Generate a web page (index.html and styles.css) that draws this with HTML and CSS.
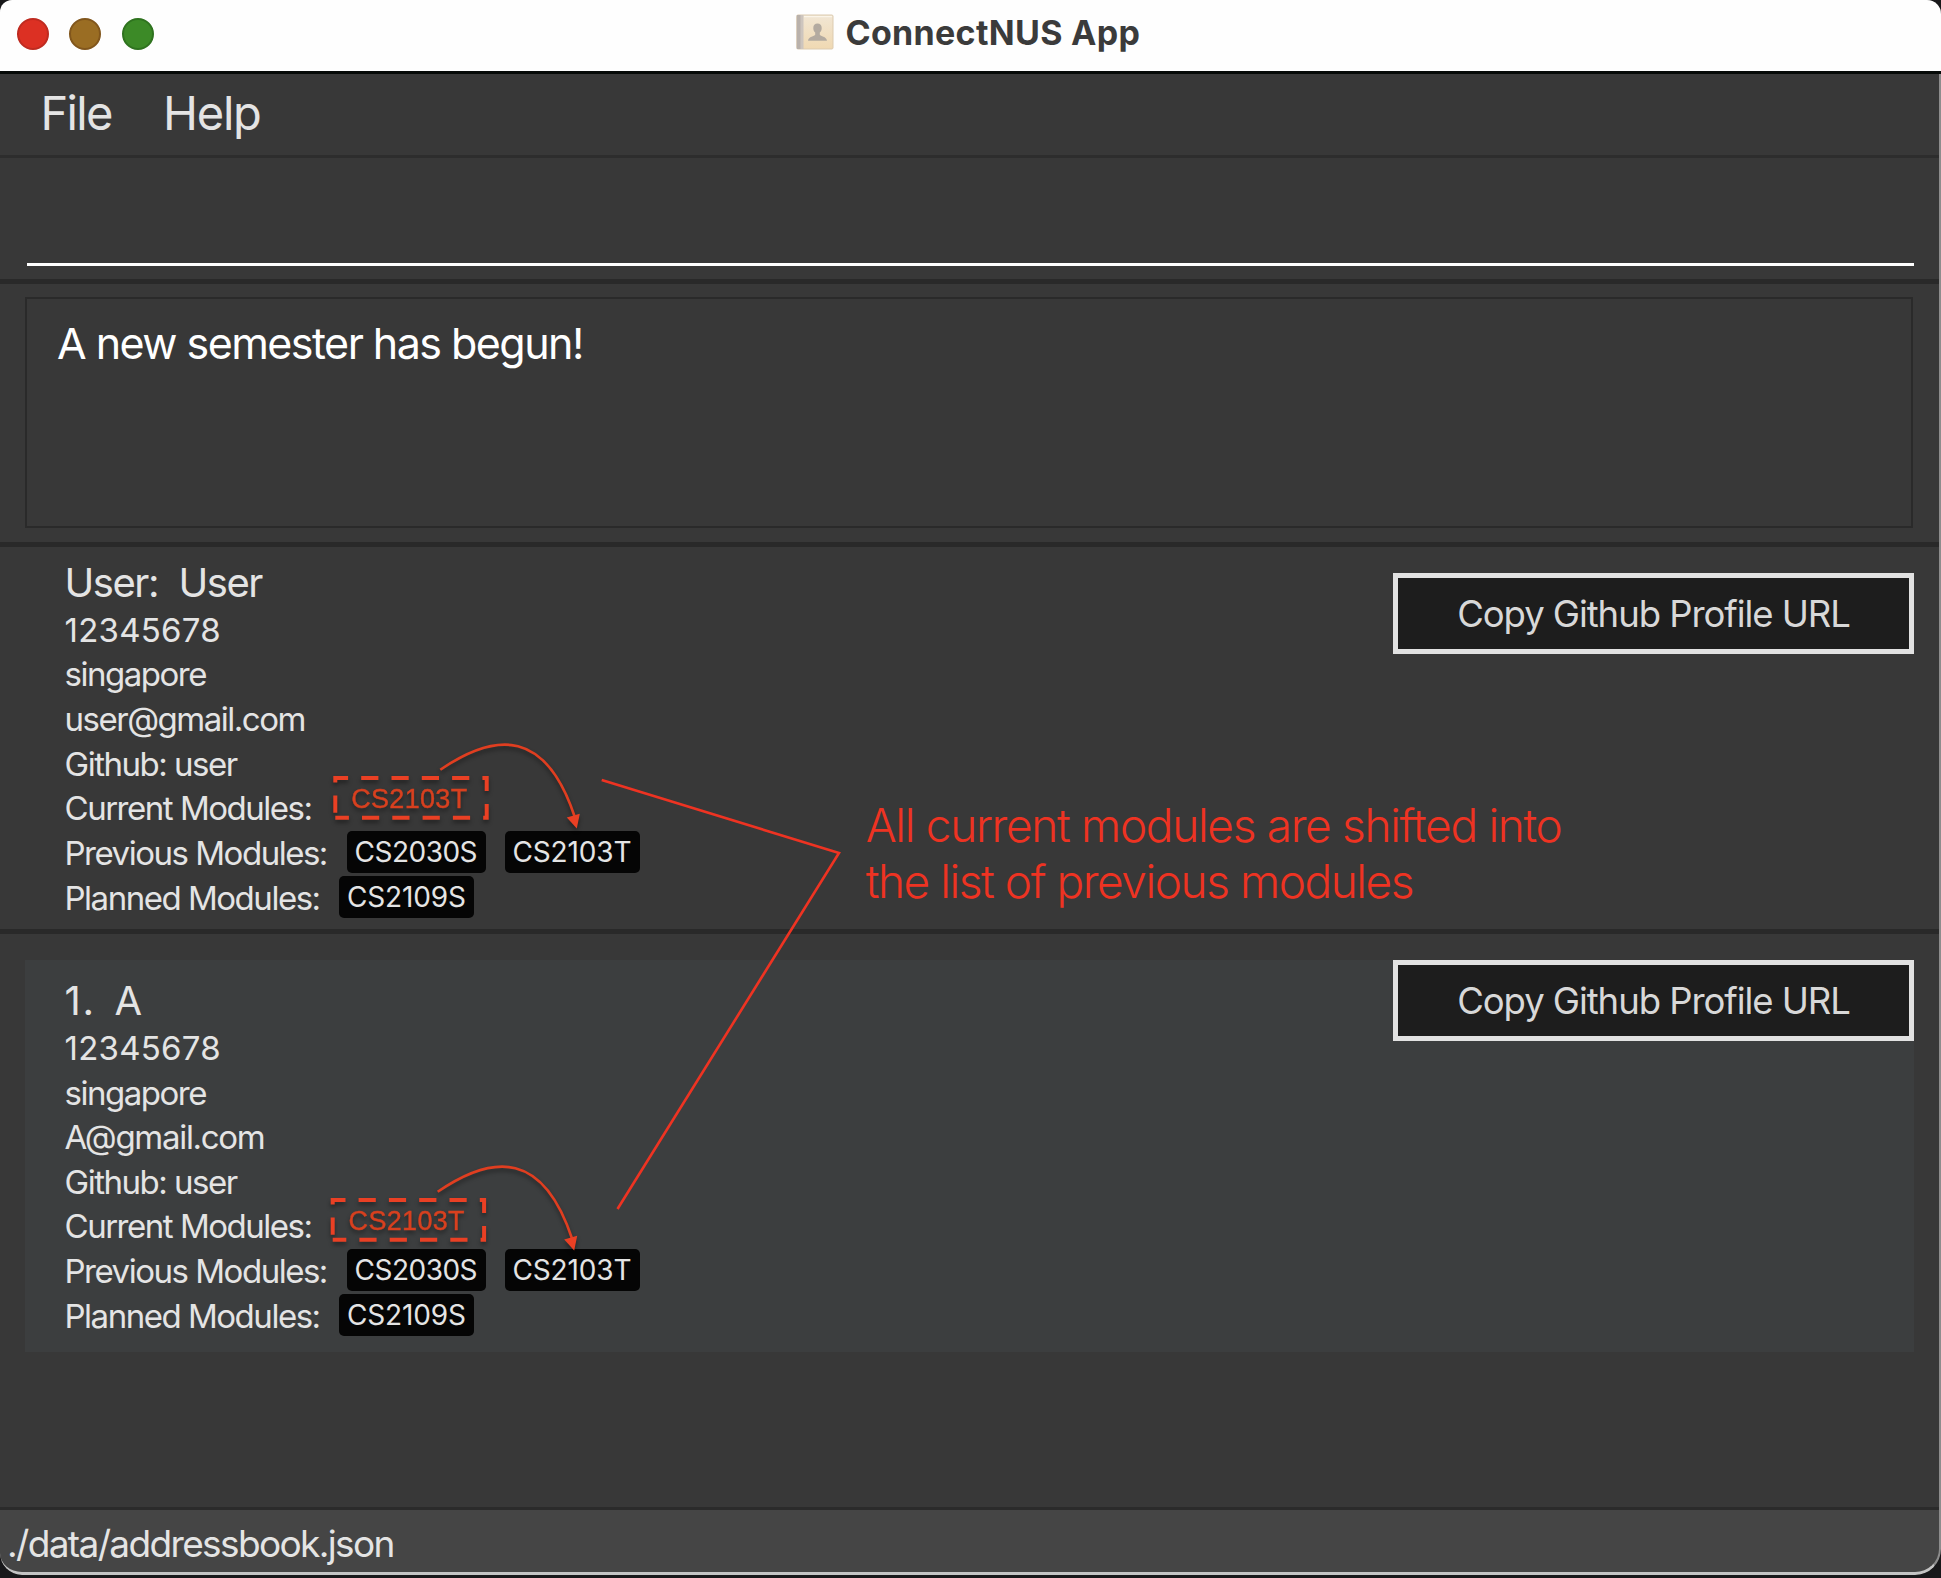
FILE: index.html
```html
<!DOCTYPE html>
<html lang="en">
<head>
<meta charset="utf-8">
<title>ConnectNUS App</title>
<link rel="stylesheet" href="styles.css">
</head>
<body>
<div class="window">
  <header class="titlebar">
    <div class="lights">
      <span class="light light-close"></span>
      <span class="light light-minimise"></span>
      <span class="light light-zoom"></span>
    </div>
    <div class="title">
      <svg class="title-icon" width="38" height="36" viewBox="0 0 38 36">
        <defs>
          <linearGradient id="cover" x1="0" y1="0" x2="0" y2="1">
            <stop offset="0" stop-color="#f1e6d4"/>
            <stop offset="1" stop-color="#f0d9b2"/>
          </linearGradient>
        </defs>
        <rect x="0.8" y="1" width="36.2" height="34" rx="1.2" fill="url(#cover)" stroke="#dccbb0" stroke-width="1"/>
        <path d="M.8 1H7v34H.8z" fill="#b9b1ab"/>
        <path d="M4.5 1H7.500v34H4.500z" fill="#cdc5be"/>
        <path d="M8 2.600H36" stroke="#fbf4e8" stroke-width="1.200"/>
        <path d="M21.500 9.500c-2.700 0-4.200 1.800-4.200 4.400 0 2 .7 3.600 1.900 4.700v2.200c-.6 1.500-6.700 1.600-7.200 6h19c-.5-4.400-6.600-4.500-7.200-6v-2.200c1.200-1.100 1.900-2.700 1.900-4.700 0-2.600-1.500-4.400-4.200-4.400z" fill="#b3aaa0"/>
      </svg>
      <span class="title-text">ConnectNUS App</span>
    </div>
  </header>

  <nav class="menubar">
    <span class="menu menu-file">File</span>
    <span class="menu menu-help">Help</span>
  </nav>

  <section class="command"><div class="command-input"></div></section>

  <section class="result"><div class="result-box">A new semester has begun!</div></section>

  <section class="profile">
    <div class="details">
      <div class="name"><span class="name-prefix">User:</span><span>User</span></div>
      <div class="row digits">12345678</div>
      <div class="row">singapore</div>
      <div class="row">user@gmail.com</div>
      <div class="row">Github: user</div>
      <div class="row">Current Modules:</div>
      <div class="row"><span class="label-previous">Previous Modules:</span><span class="chip chip-wide">CS2030S</span><span class="chip">CS2103T</span></div>
      <div class="row"><span class="label-planned">Planned Modules:</span><span class="chip">CS2109S</span></div>
    </div>
    <button class="copy">Copy Github Profile URL</button>
  </section>

  <section class="list">
    <div class="card">
      <div class="details">
        <div class="name"><span class="name-index">1.</span><span>A</span></div>
        <div class="row digits">12345678</div>
        <div class="row">singapore</div>
        <div class="row email-short">A@gmail.com</div>
        <div class="row">Github: user</div>
        <div class="row">Current Modules:</div>
        <div class="row"><span class="label-previous">Previous Modules:</span><span class="chip chip-wide">CS2030S</span><span class="chip">CS2103T</span></div>
        <div class="row"><span class="label-planned">Planned Modules:</span><span class="chip">CS2109S</span></div>
      </div>
      <button class="copy">Copy Github Profile URL</button>
    </div>
  </section>

  <footer class="status">./data/addressbook.json</footer>

  <div class="frame"></div>

  <svg class="annotations" width="1941" height="1578" viewBox="0 0 1941 1578">
    <defs>
      <g id="shift">
        <path class="dashed" d="M335.300 817.700V778H486.700V817.700Z"/>
        <text class="shift-text" x="351.200" y="808">CS2103T</text>
        <path class="arc" d="M440.300 769.800C497 731 546 730 574.800 817"/>
        <path class="head" d="M566.800 817.500L579.800 813.800L576.800 828.500Z"/>
      </g>
    </defs>
    <use class="shift" href="#shift"/>
    <use class="shift" href="#shift" x="-2.600" y="422"/>
    <path class="pointer" d="M601.700 780L839 853L617.500 1209"/>
  </svg>
  <p class="note">All current modules are shifted into<br><span class="note-second">the list of previous modules</span></p>
</div>
</body>
</html>
```
FILE: styles.css
```css
* { box-sizing: border-box; }

body {
  margin: 0;
  width: 1941px;
  height: 1578px;
  overflow: hidden;
  background: #18181a;
  font-family: Inter, "Liberation Sans", sans-serif;
  color: #e4e4e4;
}

.window {
  position: relative;
  display: flex;
  flex-direction: column;
  width: 1941px;
  height: 1575px;
  overflow: hidden;
  border-radius: 12px 14px 26px 22px;
  background: #383838;
  white-space: nowrap;
}

.titlebar {
  display: flex;
  height: 74px;
  padding-left: 16.500px;
  background: #fefefe;
  border-bottom: 3px solid #060a08;
}

.lights { display: flex; gap: 20.700px; margin: 18px 641px 0 0; width: 138px; }
.light { width: 32px; height: 32px; flex: none; border-radius: 50%; border: 2px solid; }
.light-close { background: #dc3023; border-color: #bf2b20; }
.light-minimise { background: #9a6d23; border-color: #81561c; }
.light-zoom { background: #3c8a27; border-color: #2f731f; }

.title { display: flex; gap: 12px; }
.title-icon { margin-top: 14px; }
.title-text { font-size: 34px; font-weight: 700; line-height: 66px; letter-spacing: .3px; color: #3b3b3b; }

.menubar {
  display: flex;
  height: 84px;
  padding-left: 40.500px;
  border-bottom: 3px solid #2d2d2d;
  font-size: 47px;
  line-height: 78px;
}
.menu-file { letter-spacing: -1.670px; margin-right: 51.300px; }
.menu-help { letter-spacing: -1.240px; }

.command { height: 126px; padding: 0 27.500px 0 27px; border-bottom: 5px solid #292929; }
.command-input { height: 108px; border-bottom: 3px solid #fff; }

.result { height: 263px; padding: 13px 28px 0 25px; border-bottom: 5px solid #292929; }
.result-box {
  height: 231px;
  padding: 18px 0 0 30px;
  border: 2px solid #2a2a2a;
  font-size: 43px;
  line-height: 52px;
  letter-spacing: -1.540px;
  color: #fff;
}

.profile {
  display: flex;
  justify-content: space-between;
  height: 386.500px;
  padding: 11.800px 27.500px 0 64.500px;
  border-bottom: 5px solid #292929;
}
.profile .copy { margin-top: 14.500px; }

.name { display: flex; margin-bottom: .700px; font-size: 40px; line-height: 48.200px; letter-spacing: -1.450px; }
.name-prefix { width: 114px; }
.name-index { width: 50px; letter-spacing: 1.700px; }

.row {
  display: flex;
  align-items: flex-start;
  height: 44.650px;
  font-size: 33px;
  line-height: 44.650px;
  letter-spacing: -1.480px;
}
.digits { letter-spacing: .25px; }
.email-short { letter-spacing: -1.300px; }
.label-previous { width: 282px; }
.label-planned { width: 274.500px; }

.chip {
  width: 135px;
  height: 42px;
  padding-left: 8px;
  border-radius: 5px;
  background: #050505;
  font-size: 28px;
  line-height: 43.400px;
  letter-spacing: -.15px;
}
.chip-wide { width: 139.500px; margin-right: 18.500px; letter-spacing: -.5px; }

.copy {
  width: 521px;
  height: 81px;
  padding: 1px 0 0 1px;
  border: 5px solid #e2e2e2;
  background: #1d1d1d;
  color: #d8d8d8;
  font: 400 36.500px/70px Inter, "Liberation Sans", sans-serif;
  letter-spacing: -1.060px;
}

.list { flex: 1; padding: 26.500px 27.500px 0 24.500px; }
.card {
  display: flex;
  justify-content: space-between;
  height: 391.500px;
  padding-left: 40px;
  background: #3c3e3f;
}
.card .details { padding-top: 17px; }

.status {
  height: 68px;
  padding-left: 7px;
  border-top: 3px solid #2b2b2b;
  background: #454545;
  font-size: 37px;
  line-height: 68px;
  letter-spacing: -1.640px;
}

.frame {
  position: absolute;
  inset: 74px 0 0 0;
  border-right: 2px solid #8c8c8c;
  border-bottom: 3px solid #c4c4c4;
  border-radius: 0 0 26px 22px;
}

.annotations { position: absolute; left: 0; top: 0; }
.shift { filter: drop-shadow(0 3px 2px rgba(0, 0, 0, .4)); }
.dashed { fill: none; stroke: #ea4024; stroke-width: 4px; stroke-dasharray: 17.200 13.100; stroke-dashoffset: 25.300px; }
.shift-text { font: 27px "Liberation Sans", sans-serif; letter-spacing: .32px; fill: #d8401f; stroke: #d8401f; stroke-width: .4px; }
.arc { fill: none; stroke: #e03e20; stroke-width: 2.600px; }
.head { fill: #ea4024; }
.pointer { fill: none; stroke: #ee3322; stroke-width: 2.600px; }

.note {
  position: absolute;
  left: 865.700px;
  top: 796.500px;
  margin: 0;
  font-size: 46px;
  font-weight: 300;
  line-height: 56.300px;
  letter-spacing: -1.330px;
  color: #ee3322;
}
.note-second { letter-spacing: -1.460px; }
```
